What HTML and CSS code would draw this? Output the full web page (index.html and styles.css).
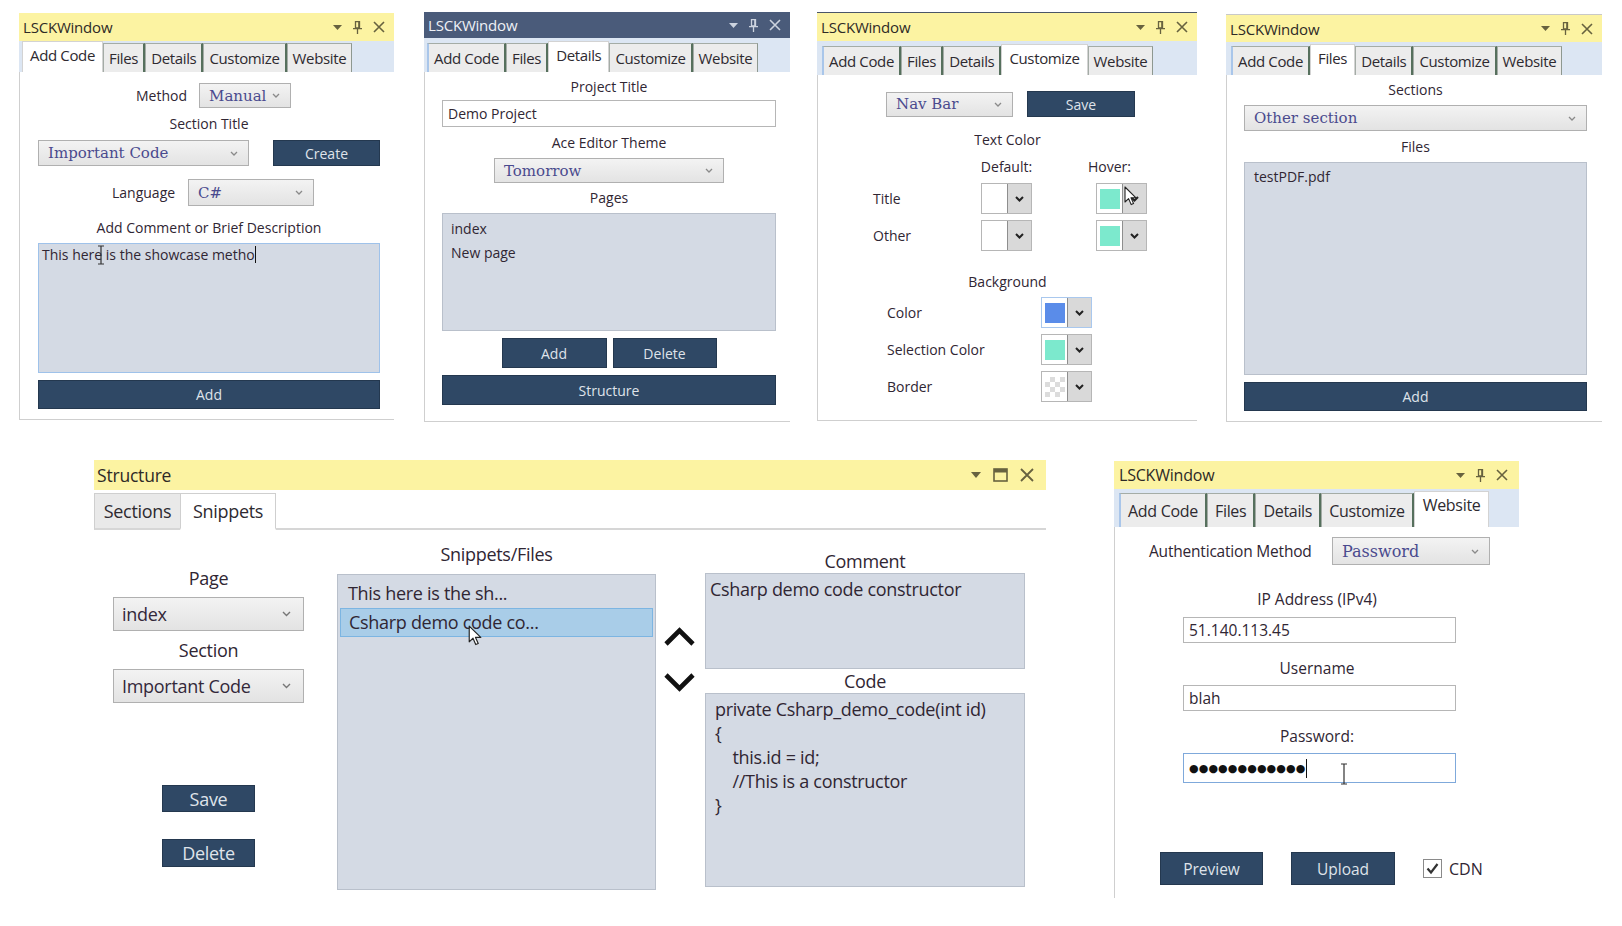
FILE: index.html
```html
<!DOCTYPE html>
<html>
<head>
<meta charset="utf-8">
<link rel="stylesheet" href="styles.css">
</head>
<body>

<!-- Window 1: Add Code -->
<section class="win w1">
  <header class="tbar"><span>LSCKWindow</span>
    <div class="ctl">
      <svg width="9" height="5" viewBox="0 0 9 5"><path d="M0 0h9L4.5 5z" fill="currentColor"/></svg>
      <svg width="9" height="13" viewBox="0 0 9 13"><path d="M2.5 0.7h4v6.3h-4z M0 7.6h9 M4.5 7.6v5.4" fill="none" stroke="currentColor" stroke-width="1.3"/><path d="M5.2 1h1.3v6H5.2z" fill="currentColor"/></svg>
      <svg width="12" height="12" viewBox="0 0 12 12"><path d="M1 1l10 10M11 1L1 11" stroke="currentColor" stroke-width="1.6"/></svg>
    </div>
  </header>
  <nav class="tabs"><span class="tab on">Add Code</span><span class="tab">Files</span><span class="tab">Details</span><span class="tab">Customize</span><span class="tab">Website</span></nav>
  <div class="body b1">
    <div class="r1"><span>Method</span><div class="combo c-manual">Manual<svg width="8" height="5" viewBox="0 0 8 5"><path d="M1 1l3 3 3-3" stroke="#8a8a8a" fill="none" stroke-width="1.3"/></svg></div></div>
    <div class="l2">Section Title</div>
    <div class="r2"><div class="combo c-imp">Important Code<svg width="8" height="5" viewBox="0 0 8 5"><path d="M1 1l3 3 3-3" stroke="#8a8a8a" fill="none" stroke-width="1.3"/></svg></div><div class="btn b-create">Create</div></div>
    <div class="r3"><span>Language</span><div class="combo c-lang">C#<svg width="8" height="5" viewBox="0 0 8 5"><path d="M1 1l3 3 3-3" stroke="#8a8a8a" fill="none" stroke-width="1.3"/></svg></div></div>
    <div class="l4">Add Comment or Brief Description</div>
    <div class="ta">This here is the showcase metho<span class="caret"></span>
      <svg class="ibeam ib1" width="8" height="20" viewBox="0 0 8 20"><path d="M1 1h6M4 1v18M1 19h6" stroke="#333" fill="none" stroke-width="1.2"/></svg>
    </div>
    <div class="btn b-add1">Add</div>
  </div>
</section>

<!-- Window 2: Details -->
<section class="win w2">
  <header class="tbar dark"><span>LSCKWindow</span>
    <div class="ctl">
      <svg width="9" height="5" viewBox="0 0 9 5"><path d="M0 0h9L4.5 5z" fill="currentColor"/></svg>
      <svg width="9" height="13" viewBox="0 0 9 13"><path d="M2.5 0.7h4v6.3h-4z M0 7.6h9 M4.5 7.6v5.4" fill="none" stroke="currentColor" stroke-width="1.3"/><path d="M5.2 1h1.3v6H5.2z" fill="currentColor"/></svg>
      <svg width="12" height="12" viewBox="0 0 12 12"><path d="M1 1l10 10M11 1L1 11" stroke="currentColor" stroke-width="1.6"/></svg>
    </div>
  </header>
  <nav class="tabs"><span class="tab first">Add Code</span><span class="tab">Files</span><span class="tab on">Details</span><span class="tab">Customize</span><span class="tab">Website</span></nav>
  <div class="body b2">
    <div class="lb h28">Project Title</div>
    <div class="inp i-proj">Demo Project</div>
    <div class="lb h31">Ace Editor Theme</div>
    <div class="combo c-theme">Tomorrow<svg width="8" height="5" viewBox="0 0 8 5"><path d="M1 1l3 3 3-3" stroke="#8a8a8a" fill="none" stroke-width="1.3"/></svg></div>
    <div class="lb h30">Pages</div>
    <div class="list l-pages"><div>index</div><div>New page</div></div>
    <div class="brow"><div class="btn b-a2">Add</div><div class="btn b-d2">Delete</div></div>
    <div class="btn b-struct">Structure</div>
  </div>
</section>

<!-- Window 3: Customize -->
<section class="win w3">
  <header class="tbar"><span>LSCKWindow</span>
    <div class="ctl">
      <svg width="9" height="5" viewBox="0 0 9 5"><path d="M0 0h9L4.5 5z" fill="currentColor"/></svg>
      <svg width="9" height="13" viewBox="0 0 9 13"><path d="M2.5 0.7h4v6.3h-4z M0 7.6h9 M4.5 7.6v5.4" fill="none" stroke="currentColor" stroke-width="1.3"/><path d="M5.2 1h1.3v6H5.2z" fill="currentColor"/></svg>
      <svg width="12" height="12" viewBox="0 0 12 12"><path d="M1 1l10 10M11 1L1 11" stroke="currentColor" stroke-width="1.6"/></svg>
    </div>
  </header>
  <nav class="tabs"><span class="tab first">Add Code</span><span class="tab">Files</span><span class="tab">Details</span><span class="tab on">Customize</span><span class="tab">Website</span></nav>
  <div class="body b3">
    <div class="r-nav"><div class="combo c-nav">Nav Bar<svg width="8" height="5" viewBox="0 0 8 5"><path d="M1 1l3 3 3-3" stroke="#8a8a8a" fill="none" stroke-width="1.3"/></svg></div><div class="btn b-save">Save</div></div>
    <div class="lb tc">Text Color</div>
    <div class="g1">
      <span class="hd hd-def">Default:</span><span class="hd hd-hov">Hover:</span>
      <span class="rl">Title</span>
      <div class="cp"><span class="sw"><i class="c-white"></i></span><span class="dd"><svg width="9" height="6" viewBox="0 0 9 6"><path d="M1 1l3.5 3.5L8 1" stroke="#222" fill="none" stroke-width="2"/></svg></span></div>
      <span></span>
      <div class="cp"><span class="sw"><i class="c-teal"></i></span><span class="dd"><svg width="9" height="6" viewBox="0 0 9 6"><path d="M1 1l3.5 3.5L8 1" stroke="#222" fill="none" stroke-width="2"/></svg></span></div>
      <span class="rl">Other</span>
      <div class="cp"><span class="sw"><i class="c-white"></i></span><span class="dd"><svg width="9" height="6" viewBox="0 0 9 6"><path d="M1 1l3.5 3.5L8 1" stroke="#222" fill="none" stroke-width="2"/></svg></span></div>
      <span></span>
      <div class="cp"><span class="sw"><i class="c-teal"></i></span><span class="dd"><svg width="9" height="6" viewBox="0 0 9 6"><path d="M1 1l3.5 3.5L8 1" stroke="#222" fill="none" stroke-width="2"/></svg></span></div>
    </div>
    <div class="lb bg">Background</div>
    <div class="g2">
      <span class="rl">Color</span>
      <div class="cp focus"><span class="sw"><i class="c-blue"></i></span><span class="dd"><svg width="9" height="6" viewBox="0 0 9 6"><path d="M1 1l3.5 3.5L8 1" stroke="#222" fill="none" stroke-width="2"/></svg></span></div>
      <span class="rl">Selection Color</span>
      <div class="cp"><span class="sw"><i class="c-teal"></i></span><span class="dd"><svg width="9" height="6" viewBox="0 0 9 6"><path d="M1 1l3.5 3.5L8 1" stroke="#222" fill="none" stroke-width="2"/></svg></span></div>
      <span class="rl">Border</span>
      <div class="cp"><span class="sw"><i class="c-check"></i></span><span class="dd"><svg width="9" height="6" viewBox="0 0 9 6"><path d="M1 1l3.5 3.5L8 1" stroke="#222" fill="none" stroke-width="2"/></svg></span></div>
    </div>
  </div>
  <svg class="ptr ptr3" width="13" height="20" viewBox="0 0 13 20"><path d="M1 1v15l3.6-3.4 2.6 6 2.4-1-2.6-5.8H12z" fill="#fff" stroke="#222" stroke-width="1.1" stroke-linejoin="round"/></svg>
</section>

<!-- Window 4: Files -->
<section class="win w4">
  <header class="tbar"><span>LSCKWindow</span>
    <div class="ctl">
      <svg width="9" height="5" viewBox="0 0 9 5"><path d="M0 0h9L4.5 5z" fill="currentColor"/></svg>
      <svg width="9" height="13" viewBox="0 0 9 13"><path d="M2.5 0.7h4v6.3h-4z M0 7.6h9 M4.5 7.6v5.4" fill="none" stroke="currentColor" stroke-width="1.3"/><path d="M5.2 1h1.3v6H5.2z" fill="currentColor"/></svg>
      <svg width="12" height="12" viewBox="0 0 12 12"><path d="M1 1l10 10M11 1L1 11" stroke="currentColor" stroke-width="1.6"/></svg>
    </div>
  </header>
  <nav class="tabs"><span class="tab first">Add Code</span><span class="tab on">Files</span><span class="tab">Details</span><span class="tab">Customize</span><span class="tab">Website</span></nav>
  <div class="body b4">
    <div class="lb h30">Sections</div>
    <div class="combo c-sec">Other section<svg width="8" height="5" viewBox="0 0 8 5"><path d="M1 1l3 3 3-3" stroke="#8a8a8a" fill="none" stroke-width="1.3"/></svg></div>
    <div class="lb h31">Files</div>
    <div class="list l-files"><div>testPDF.pdf</div></div>
    <div class="btn b-add4">Add</div>
  </div>
</section>

<!-- Window 5: Structure -->
<section class="win w5">
  <header class="tbar big"><span>Structure</span>
    <div class="ctl">
      <svg width="10" height="6" viewBox="0 0 10 6"><path d="M0 0h10L5 6z" fill="currentColor"/></svg>
      <svg width="15" height="14" viewBox="0 0 15 14"><rect x="1" y="1" width="13" height="12" fill="none" stroke="currentColor" stroke-width="1.6"/><rect x="1" y="1" width="13" height="3.5" fill="currentColor"/></svg>
      <svg width="14" height="14" viewBox="0 0 14 14"><path d="M1 1l12 12M13 1L1 13" stroke="currentColor" stroke-width="1.8"/></svg>
    </div>
  </header>
  <nav class="stabs"><span class="stab">Sections</span><span class="stab on">Snippets</span><span class="sfill"></span></nav>
  <div class="sbody">
    <div class="scol1">
      <div class="slb">Page</div>
      <div class="combo sans s-c1">index<svg width="9" height="6" viewBox="0 0 9 6"><path d="M1 1l3.5 3.5L8 1" stroke="#777" fill="none" stroke-width="1.4"/></svg></div>
      <div class="slb">Section</div>
      <div class="combo sans s-c2">Important Code<svg width="9" height="6" viewBox="0 0 9 6"><path d="M1 1l3.5 3.5L8 1" stroke="#777" fill="none" stroke-width="1.4"/></svg></div>
      <div class="btn s-save">Save</div>
      <div class="btn s-del">Delete</div>
    </div>
    <div class="scol2">
      <div class="slb">Snippets/Files</div>
      <div class="list s-list"><div class="it">This here is the sh...</div><div class="it sel">Csharp demo code co...</div></div>
    </div>
    <div class="scol3">
      <svg class="up" width="33" height="21" viewBox="0 0 33 21"><path d="M3 18L16.5 4.5 30 18" stroke="#111" fill="none" stroke-width="4.6"/></svg>
      <svg class="down" width="33" height="21" viewBox="0 0 33 21"><path d="M3 3l13.5 13.5L30 3" stroke="#111" fill="none" stroke-width="4.6"/></svg>
    </div>
    <div class="scol4">
      <div class="slb">Comment</div>
      <div class="list s-com">Csharp demo code constructor</div>
      <div class="slb">Code</div>
      <div class="list s-code">private Csharp_demo_code(int id)
{
    this.id = id;
    //This is a constructor
}</div>
    </div>
  </div>
  <svg class="ptr ptr5" width="14" height="21" viewBox="0 0 13 20"><path d="M1 1v15l3.6-3.4 2.6 6 2.4-1-2.6-5.8H12z" fill="#fff" stroke="#222" stroke-width="1.1" stroke-linejoin="round"/></svg>
</section>

<!-- Window 6: Website -->
<section class="win w6">
  <header class="tbar mid"><span>LSCKWindow</span>
    <div class="ctl">
      <svg width="9" height="5" viewBox="0 0 9 5"><path d="M0 0h9L4.5 5z" fill="currentColor"/></svg>
      <svg width="9" height="13" viewBox="0 0 9 13"><path d="M2.5 0.7h4v6.3h-4z M0 7.6h9 M4.5 7.6v5.4" fill="none" stroke="currentColor" stroke-width="1.3"/><path d="M5.2 1h1.3v6H5.2z" fill="currentColor"/></svg>
      <svg width="12" height="12" viewBox="0 0 12 12"><path d="M1 1l10 10M11 1L1 11" stroke="currentColor" stroke-width="1.6"/></svg>
    </div>
  </header>
  <nav class="tabs"><span class="tab first">Add Code</span><span class="tab">Files</span><span class="tab">Details</span><span class="tab">Customize</span><span class="tab on">Website</span></nav>
  <div class="body b6">
    <div class="r-auth"><span>Authentication Method</span><div class="combo c-auth">Password<svg width="8" height="5" viewBox="0 0 8 5"><path d="M1 1l3 3 3-3" stroke="#8a8a8a" fill="none" stroke-width="1.3"/></svg></div></div>
    <div class="wlb m22">IP Address (IPv4)</div>
    <div class="inp w-in m6">51.140.113.45</div>
    <div class="wlb m13">Username</div>
    <div class="inp w-in m5">blah</div>
    <div class="wlb m13">Password:</div>
    <div class="inp w-in w-pass m5"><span class="dots">●●●●●●●●●●●●</span><span class="caret c2"></span>
      <svg class="ibeam ib2" width="8" height="22" viewBox="0 0 8 22"><path d="M1 1h6M4 1v20M1 21h6" stroke="#333" fill="none" stroke-width="1.2"/></svg>
    </div>
    <div class="r-btns"><div class="btn b-prev">Preview</div><div class="btn b-up">Upload</div><span class="chk"><svg width="17" height="17" viewBox="0 0 17 17"><path d="M3.5 8.5l3.5 4L13.5 4" stroke="#333" fill="none" stroke-width="2.2"/></svg></span><span class="cdn">CDN</span></div>
  </div>
</section>

</body>
</html>
```

FILE: styles.css
```css
* { box-sizing: border-box; margin: 0; padding: 0; }

body {
  width: 1622px;
  height: 926px;
  background: #ffffff;
  font-family: "Open Sans", "Noto Sans", sans-serif;
  color: #302633;
  position: relative;
  overflow: hidden;
}

/* ---------- window shell ---------- */
.win { position: absolute; display: flex; flex-direction: column; }
.w1 { left: 19px; top: 13px; width: 375px; height: 407px; --th: 28px; --sh: 31px; }
.w2 { left: 424px; top: 12px; width: 366px; height: 410px; --th: 26px; --sh: 34px; }
.w3 { left: 817px; top: 12px; width: 380px; height: 409px; --th: 29px; --sh: 34px; }
.w4 { left: 1226px; top: 14px; width: 376px; height: 408px; --th: 28px; --sh: 33px; }
.w5 { left: 94px; top: 460px; width: 952px; height: 438px; --th: 30px; }
.w6 { left: 1114px; top: 461px; width: 405px; height: 437px; --th: 28px; --sh: 38px; }

.tbar {
  flex: none;
  height: var(--th);
  display: flex;
  align-items: center;
  justify-content: space-between;
  padding: 0 9px 0 4px;
  background: #fcf3a2;
  font-size: 15px;
  color: #2e2a26;
  letter-spacing: -0.2px;
}
.tbar.dark { background: #4a5b7a; color: #eef1f6; }
.tbar.dark .ctl { color: #ccd3df; }
.w3 .tbar { border-top: 1px solid #4a5568; }
.w4 .tbar { border-top: 1px solid #c9c9c9; }
.tbar.big { font-size: 17.5px; padding-left: 3px; padding-right: 12px; }
.tbar.big .ctl { gap: 12px; }
.tbar.mid { font-size: 16px; padding-left: 5px; padding-right: 11px; }

.ctl { display: flex; align-items: center; gap: 11px; color: #67623f; }
.ctl svg { display: block; }

/* ---------- tabs ---------- */
.tabs {
  flex: none;
  height: var(--sh);
  background: #dce6f3;
  display: flex;
  align-items: flex-end;
  padding-left: 3px;
}
.w3 .tabs, .w4 .tabs { padding-left: 5px; }
.w6 .tabs { padding-left: 5px; }
.tab {
  height: 29px;
  padding: 0 5px;
  display: flex;
  align-items: center;
  background: #ececec;
  border: 1px solid #a4aca6;
  border-bottom: none;
  border-right: 2px solid #56705d;
  font-size: 15px;
  color: #2e2a30;
  letter-spacing: -0.35px;
}
.tab:last-child { border-right: 1px solid #8e9890; }
.tab.first { border-left: 2px solid #a9c6ea; }
.tab.on {
  height: 31px;
  background: #ffffff;
  border: 1px solid #d3d3d3;
  border-bottom: none;
  padding: 0 7px;
  align-items: flex-start;
  padding-top: 3px;
}
.w6 .tab { height: 34px; font-size: 16px; padding: 0 7px; letter-spacing: -0.3px; }
.w6 .tab.on { height: 36px; padding: 2px 8px 0; }

.body {
  flex: 1;
  background: #ffffff;
  border-left: 1px solid #cfcfcf;
  border-bottom: 1px solid #cfcfcf;
  display: flex;
  flex-direction: column;
  font-size: 14px;
}

/* ---------- shared controls ---------- */
.combo {
  display: flex;
  align-items: center;
  justify-content: space-between;
  border: 1px solid #b0b0b0;
  background: linear-gradient(#f3f3f3, #e3e3e3);
  padding: 0 10px 0 9px;
  font-family: "DejaVu Serif", "Liberation Serif", serif;
  font-size: 15px;
  color: #4a4a8e;
}
.combo.sans {
  font-family: "Open Sans", sans-serif;
  font-size: 18px;
  color: #33283a;
  padding: 0 12px 0 8px;
  letter-spacing: -0.3px;
}

.btn {
  display: flex;
  align-items: center;
  justify-content: center;
  background: #2f4865;
  border: 1px solid #24384f;
  color: #dfe3ea;
  font-size: 14px;
}

.list { background: #d4dae4; border: 1px solid #b9c0cb; }

.inp {
  display: flex;
  align-items: center;
  background: #ffffff;
  border: 1px solid #b6b6b6;
  padding-left: 5px;
}

.lb { text-align: center; }
.h28 { height: 28px; line-height: 30px; }
.h30 { height: 30px; line-height: 30px; }
.h31 { height: 31px; line-height: 31px; }

.caret { display: inline-block; width: 1px; height: 17px; background: #111; vertical-align: -3px; }
.ibeam { position: absolute; }
.ptr { position: absolute; }

/* ---------- window 1 ---------- */
.b1 { padding: 0 14px 0 18px; }
.b1 .r1 { margin-top: 11px; height: 25px; display: flex; align-items: center; gap: 12px; padding-left: 98px; }
.c-manual { width: 92px; height: 25px; }
.b1 .l2 { height: 32px; line-height: 32px; text-align: center; }
.b1 .r2 { height: 26px; display: flex; justify-content: space-between; }
.c-imp { width: 211px; }
.b-create { width: 107px; }
.b1 .r3 { margin-top: 13px; height: 27px; display: flex; align-items: center; gap: 13px; padding-left: 74px; }
.c-lang { width: 126px; height: 27px; }
.b1 .l4 { height: 37px; display: flex; align-items: flex-end; justify-content: center; padding-bottom: 5px; line-height: 20px; }
.ta {
  position: relative;
  height: 130px;
  background: #d4dae4;
  border: 1px solid #9fc2ea;
  padding: 1px 3px;
  line-height: 20px;
}
.ib1 { left: 58px; top: 1px; }
.b-add1 { margin-top: 7px; height: 29px; }

/* ---------- window 2 ---------- */
.b2 { padding: 0 14px 0 17px; }
.i-proj { height: 27px; }
.c-theme { width: 230px; height: 25px; align-self: center; }
.l-pages { height: 118px; padding: 3px 0 0 8px; line-height: 24px; }
.brow { margin-top: 7px; height: 30px; display: flex; justify-content: center; gap: 6px; }
.b-a2 { width: 105px; }
.b-d2 { width: 104px; }
.b-struct { margin-top: 7px; height: 30px; }

/* ---------- window 3 ---------- */
.r-nav { margin-top: 16px; height: 26px; display: flex; align-items: center; gap: 14px; padding-left: 68px; }
.c-nav { width: 127px; height: 25px; }
.b-save { width: 108px; height: 26px; }
.tc { padding-top: 13px; line-height: 20px; }
.g1 {
  margin-top: 7px;
  padding-left: 55px;
  display: grid;
  grid-template-columns: 108px 51px 64px 51px;
  grid-template-rows: 20px 31px 31px;
  row-gap: 6px;
}
.hd { align-self: center; line-height: 20px; }
.hd-def { grid-column: 2; justify-self: center; }
.hd-hov { grid-column: 4; justify-self: start; margin-left: -8px; }
.rl { align-self: center; }
.bg { height: 46px; padding-top: 21px; line-height: 20px; }
.g2 {
  padding-left: 69px;
  display: grid;
  grid-template-columns: 154px 51px;
  grid-template-rows: 31px 31px 31px;
  row-gap: 6px;
}
.cp { display: flex; width: 51px; height: 31px; border: 1px solid #b6b6b6; background: #fff; }
.cp.focus { border-color: #a9c8ee; }
.sw { flex: 1; display: flex; align-items: center; justify-content: center; }
.sw i { display: block; width: 20px; height: 20px; }
.c-white { background: #ffffff; }
.c-teal { background: #7ce9cd; }
.c-blue { background: #5a8ce9; }
.c-check {
  background-color: #ffffff;
  background-image: conic-gradient(#dcdcdc 25%, #ffffff 0 50%, #dcdcdc 0 75%, #ffffff 0);
  background-size: 10px 10px;
}
.dd { width: 24px; background: #d9d9d9; border-left: 1px solid #8e8e8e; display: flex; align-items: center; justify-content: center; }
.ptr3 { left: 307px; top: 174px; }

/* ---------- window 4 ---------- */
.b4 { padding: 0 15px 0 17px; }
.c-sec { height: 26px; }
.l-files { height: 213px; padding: 2px 0 0 9px; line-height: 24px; }
.b-add4 { margin-top: 7px; height: 29px; }

/* ---------- window 5: Structure ---------- */
.stabs { flex: none; height: 40px; display: flex; align-items: flex-end; background: #ffffff; }
.stab {
  height: 37px;
  display: flex;
  align-items: center;
  font-size: 18px;
  letter-spacing: -0.3px;
  color: #2e2a30;
  border: 1px solid #cfcfcf;
  border-bottom: 2px solid #d6d6d6;
}
.stab:first-child { width: 86px; justify-content: center; background: #e9e9e9; border-right: none; }
.stab.on { width: 96px; justify-content: center; background: #ffffff; border-bottom-color: #ffffff; }
.sfill { flex: 1; height: 2px; background: #d6d6d6; }

.sbody { flex: 1; display: flex; padding-left: 19px; font-size: 18px; letter-spacing: -0.3px; }
.slb { height: 24px; line-height: 24px; text-align: center; }
.scol1 { width: 191px; display: flex; flex-direction: column; }
.scol1 .slb:first-child { margin-top: 36px; }
.s-c1 { margin-top: 7px; height: 34px; }
.scol1 .slb:nth-child(3) { margin-top: 7px; }
.s-c2 { margin-top: 7px; height: 34px; }
.s-save { margin-top: 82px; width: 93px; height: 27px; align-self: center; font-size: 18px; }
.s-del { margin-top: 27px; width: 93px; height: 28px; align-self: center; font-size: 18px; }

.scol2 { width: 319px; margin-left: 33px; display: flex; flex-direction: column; }
.scol2 .slb { margin-top: 12px; }
.s-list { margin-top: 8px; height: 316px; padding-top: 4px; }
.it { height: 29px; line-height: 29px; padding-left: 10px; }
.it.sel { margin: 0 2px; padding-left: 8px; background: #a9cde8; border: 1px solid #7cb5e2; line-height: 27px; }

.scol3 { width: 32px; margin-left: 7px; display: flex; flex-direction: column; }
.scol3 svg { display: block; }
.up { margin-top: 96px; }
.down { margin-top: 25px; }

.scol4 { width: 320px; margin-left: 10px; display: flex; flex-direction: column; }
.scol4 .slb:first-child { margin-top: 19px; }
.s-com { height: 96px; padding: 3px 4px; line-height: 24px; }
.s-code { height: 194px; padding: 3px 9px; line-height: 24px; white-space: pre; }
.ptr5 { left: 374px; top: 165px; }

/* ---------- window 6: Website ---------- */
.b6 { border-bottom: none; font-size: 15.5px; position: relative; }
.r-auth { margin-top: 10px; height: 28px; display: flex; align-items: center; gap: 15px; padding-left: 34px; }
.r-auth span { width: 168px; white-space: nowrap; letter-spacing: -0.2px; }
.c-auth { width: 158px; height: 28px; font-size: 16px; }
.wlb { height: 24px; line-height: 24px; text-align: center; }
.m22 { margin-top: 22px; }
.m13 { margin-top: 13px; }
.m6 { margin-top: 6px; }
.m5 { margin-top: 5px; }
.w-in { margin-left: 68px; width: 273px; height: 26px; position: relative; }
.w-pass { height: 30px; border-color: #7fa9db; }
.dots { font-family: "DejaVu Sans", sans-serif; font-size: 11px; letter-spacing: 0.1px; color: #111; }
.c2 { height: 19px; margin-left: 1px; }
.ib2 { left: 156px; top: 9px; }
.r-btns { margin-top: 69px; height: 33px; display: flex; align-items: center; padding-left: 45px; }
.b-prev { width: 103px; height: 33px; font-size: 15.5px; }
.b-up { width: 104px; height: 33px; margin-left: 28px; font-size: 15.5px; }
.chk { margin-left: 28px; width: 19px; height: 19px; border: 1px solid #8a8a8a; display: flex; align-items: center; justify-content: center; background: #fff; }
.cdn { margin-left: 7px; font-size: 16px; }
```
